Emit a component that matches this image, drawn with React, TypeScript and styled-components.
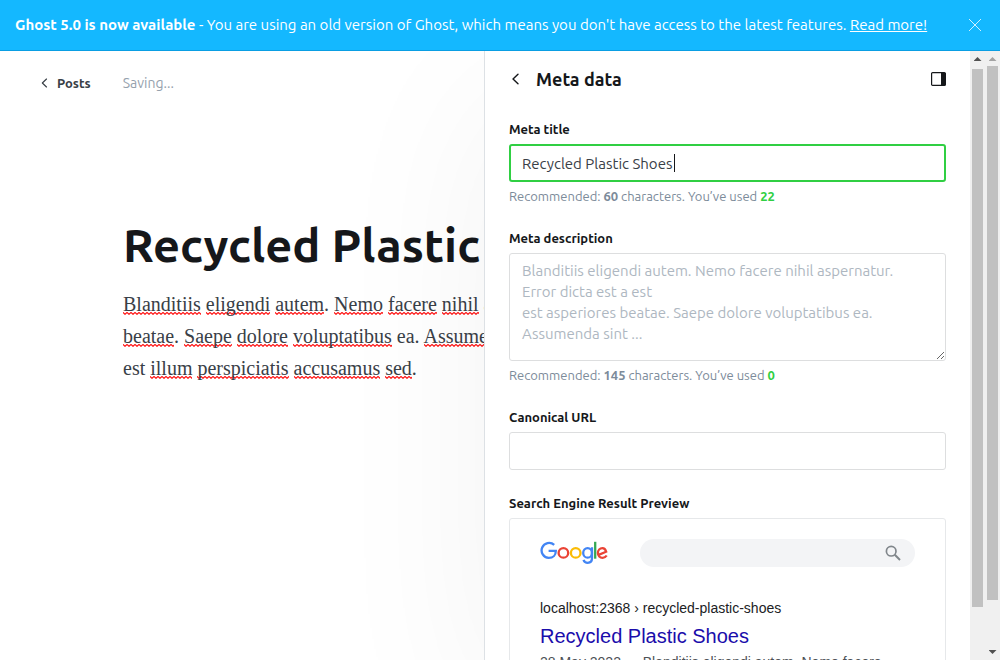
import React, { useState } from "react";
import styled, { createGlobalStyle } from "styled-components";

const ui = `Ubuntu, "Open Sans", "Noto Sans", sans-serif`;

const squiggle = `url("data:image/svg+xml,%3Csvg xmlns='http://www.w3.org/2000/svg' width='4' height='3'%3E%3Cpath d='M-1 .5 0 .5 2 2.3 4 .5 5 .5' fill='none' stroke='%23ff1010' stroke-width='1.2'/%3E%3C/svg%3E")`;

const GlobalStyle = createGlobalStyle`
  *, *::before, *::after { box-sizing: border-box; }
  body {
    margin: 0;
    font-family: ${ui};
    color: #15171a;
    background: #fff;
  }
  button, input, textarea { font-family: inherit; }
  h1, h2, p { margin: 0; }
`;

const Page = styled.div`
  display: flex;
  flex-direction: column;
  height: 100vh;
  overflow: hidden;
`;

const Banner = styled.header`
  display: flex;
  align-items: center;
  justify-content: space-between;
  flex: none;
  height: 51px;
  padding: 0 18px 1px 15px;
  border-bottom: 1px solid #0a9ee3;
  background: #14b8ff;
  color: #fff;
  font-size: 15px;
  line-height: 20px;
  white-space: nowrap;
`;

const BannerTitle = styled.strong`
  font-weight: 600;
`;

const BannerLink = styled.a`
  color: inherit;
  text-decoration: underline;
`;

const IconButton = styled.button`
  display: flex;
  padding: 0;
  border: 0;
  background: none;
  color: inherit;
`;

const Body = styled.div`
  display: flex;
  flex: 1;
  min-height: 0;
`;

const Workspace = styled.div`
  position: relative;
  display: flex;
  flex: 1;
  min-width: 0;
  overflow: hidden;
`;

const Editor = styled.main`
  flex: 1;
  min-width: 0;
`;

const EditorBar = styled.nav`
  display: flex;
  align-items: center;
  gap: 32px;
  padding: 22px 0 0 39px;
  font-size: 14px;
  line-height: 20px;
`;

const BackLink = styled.a`
  display: flex;
  align-items: center;
  gap: 8px;
  color: #394047;
  font-size: 13px;
  font-weight: 600;
  text-decoration: none;
`;

const Status = styled.span`
  color: #95a1ad;
`;

const Article = styled.article`
  padding: 124px 0 0 123px;
`;

const Title = styled.h1`
  font-size: 47px;
  line-height: 56px;
  font-weight: 700;
  white-space: nowrap;
`;

const Paragraph = styled.p`
  margin-top: 15px;
  color: #394047;
  font-family: "Liberation Serif", serif;
  font-size: 20px;
  line-height: 32px;
  white-space: nowrap;
`;

const Misspelt = styled.span`
  background: ${squiggle} left bottom / 4px 3px repeat-x;
`;

const Panel = styled.aside`
  position: absolute;
  top: 0;
  right: 0;
  bottom: 0;
  display: flex;
  width: 501px;
  border-left: 1px solid #dde1e5;
  background: #fff;
  box-shadow: 0 50px 160px rgba(0, 0, 0, 0.05);
`;

const PanelContent = styled.div`
  flex: 1;
  min-width: 0;
  padding: 0 24px;
  overflow: hidden;
`;

const PanelHeader = styled.div`
  display: flex;
  align-items: center;
  gap: 15px;
  height: 56px;
  margin-bottom: 2px;
  color: #15171a;
`;

const PanelTitle = styled.h2`
  flex: 1;
  font-size: 18px;
  line-height: 24px;
  font-weight: 700;
`;

const Field = styled.div`
  display: flex;
  flex-direction: column;
  padding-top: 10px;
  margin-bottom: 12px;
`;

const Label = styled.label`
  margin-bottom: 5px;
  font-size: 13px;
  line-height: 20px;
  font-weight: 600;
`;

const InputWrap = styled.div`
  position: relative;
  display: flex;
`;

const TextInput = styled.input<{ $active?: boolean }>`
  width: 100%;
  height: 38px;
  padding: 0 ${p => (p.$active ? 11 : 12)}px;
  border: ${p => (p.$active ? "2px solid #30cf43" : "1px solid #dddedf")};
  border-radius: 3px;
  outline: 0;
  background: #fff;
  color: #394047;
  font-size: 15px;
`;

const Caret = styled.span`
  position: absolute;
  top: 10px;
  left: 165px;
  width: 1px;
  height: 18px;
  background: #15171a;
`;

const TextArea = styled.textarea`
  width: 100%;
  height: 108px;
  padding: 6px 32px 6px 12px;
  border: 1px solid #dddedf;
  border-radius: 3px;
  outline: 0;
  resize: vertical;
  overflow: hidden;
  color: #394047;
  font-size: 15px;
  line-height: 21px;
  &::placeholder { color: #aeb7c1; opacity: 1; }
`;

const Hint = styled.p`
  margin-top: 4px;
  color: #7c8b9a;
  font-size: 13px;
  line-height: 20px;
`;

const Count = styled.strong`
  color: #30cf43;
`;

const PreviewLabel = styled.h2`
  margin: 23px 0 5px;
  font-size: 13px;
  line-height: 20px;
  font-weight: 600;
`;

const Preview = styled.section`
  padding: 20px 30px;
  border: 1px solid #e6e8ea;
  border-radius: 3px;
  font-family: "Liberation Sans", Arial, sans-serif;
`;

const SearchRow = styled.div`
  display: flex;
  align-items: center;
  gap: 32px;
  margin-bottom: 30px;
`;

const SearchBar = styled.div`
  display: flex;
  flex: 1;
  align-items: center;
  justify-content: flex-end;
  height: 28px;
  padding-right: 14px;
  border-radius: 14px;
  background: #f3f4f6;
`;

const ResultUrl = styled.p`
  color: #202124;
  font-size: 14px;
  line-height: 22px;
`;

const ResultTitle = styled.p`
  margin: 4px 0 2px;
  color: #1a0dab;
  font-size: 20px;
  line-height: 26px;
`;

const ResultText = styled.p`
  padding-right: 16px;
  color: #4d5156;
  font-size: 14px;
  line-height: 22px;
`;

const Track = styled.div`
  flex: none;
  display: flex;
  flex-direction: column;
  align-items: center;
  width: 15px;
  background: #f0f0f0;
`;

const Arrow = styled.span<{ $down?: boolean; $dim?: boolean }>`
  flex: none;
  width: 8px;
  height: 4px;
  margin: ${p => (p.$down ? "0 0 6px" : "6px 0 0")};
  background: ${p => (p.$dim ? "#a3a3a3" : "#505050")};
  clip-path: ${p =>
    p.$down ? "polygon(0 0, 100% 0, 50% 100%)" : "polygon(50% 0, 100% 100%, 0 100%)"};
`;

const Thumb = styled.span<{ $grow: number; $gap: number }>`
  flex: ${p => p.$grow} 0 0;
  width: 11px;
  margin-top: ${p => p.$gap}px;
  background: #c1c1c1;
`;

const Rest = styled.span<{ $grow: number }>`
  flex: ${p => p.$grow} 0 0;
`;

const Chevron = ({ size }: { size: number }) => (
  <svg width={size} height={size} viewBox="0 0 12 12" fill="none" stroke="currentColor" strokeWidth="1.4" strokeLinecap="round" strokeLinejoin="round" aria-hidden="true">
    <path d="M9 1.200 4 6l5 4.800" />
  </svg>
);

const GoogleLogo = () => (
  <svg width="68" height="24" viewBox="0 0 68 24" fill="none" strokeWidth="2.3" role="img" aria-label="Google">
    <path stroke="#4285f4" d="M14.200 3.900A7.500 7.500 0 1 0 8.700 16.900c4.400 0 7.100-2.900 7.100-7H8.600" />
    <circle stroke="#ea4335" cx="23.400" cy="11.900" r="4.800" />
    <circle stroke="#fbbc05" cx="35.700" cy="11.900" r="4.800" />
    <path stroke="#4285f4" d="M52 6.200v10.900c0 3-1.700 4.700-4.200 4.700-2.200 0-3.700-1.300-4.300-3" />
    <ellipse stroke="#4285f4" cx="47.600" cy="11.900" rx="4.400" ry="4.800" />
    <path stroke="#34a853" d="M55.200.8v16.900" />
    <path stroke="#ea4335" d="M58.600 13.900l7.600-3.200C65.500 8.300 64.200 7.100 62.400 7.100c-2.500 0-4.500 2.100-4.500 4.800 0 2.800 2 4.900 4.700 4.900 1.800 0 3.200-.9 4.100-2.300" />
  </svg>
);

const placeholder =
  "Blanditiis eligendi autem. Nemo facere nihil aspernatur. Error dicta est a est\nest asperiores beatae. Saepe dolore voluptatibus ea. Assumenda sint ...";

const lines = [
  "*Blanditiis *eligendi *autem . *Nemo *facere *nihil *aspernatur . Error *dicta est a est",
  "*beatae . *Saepe *dolore *voluptatibus ea. *Assumenda *sint",
  "est *illum *perspiciatis *accusamus *sed .",
];

const renderLine = (line: string) =>
  line.split(" ").map((word, i) => {
    const space = i > 0 && word !== "." ? " " : "";
    return (
      <React.Fragment key={i}>
        {space}
        {word.startsWith("*") ? <Misspelt>{word.slice(1)}</Misspelt> : word}
      </React.Fragment>
    );
  });

export default function App() {
  const [title, setTitle] = useState("Recycled Plastic Shoes");
  const [description, setDescription] = useState("");

  return (
    <Page>
      <GlobalStyle />
      <Banner>
        <span>
          <BannerTitle>Ghost 5.0 is now available</BannerTitle> - You are using an old version of Ghost, which means you
          don't have access to the latest features. <BannerLink href="#update">Read more!</BannerLink>
        </span>
        <IconButton aria-label="Dismiss">
          <svg width="14" height="14" viewBox="0 0 14 14" stroke="currentColor" strokeWidth=".8" aria-hidden="true">
            <path d="M1 1l12 12M13 1 1 13" />
          </svg>
        </IconButton>
      </Banner>
      <Body>
        <Workspace>
          <Editor>
            <EditorBar>
              <BackLink href="#posts">
                <Chevron size={10} />
                Posts
              </BackLink>
              <Status>Saving...</Status>
            </EditorBar>
            <Article>
              <Title>Recycled Plastic Shoes</Title>
              <Paragraph>
                {lines.map((line, i) => (
                  <React.Fragment key={i}>
                    {i > 0 && <br />}
                    {renderLine(line)}
                  </React.Fragment>
                ))}
              </Paragraph>
            </Article>
          </Editor>
          <Panel>
            <PanelContent>
              <PanelHeader>
                <IconButton aria-label="Back">
                  <Chevron size={12} />
                </IconButton>
                <PanelTitle>Meta data</PanelTitle>
                <IconButton aria-label="Toggle settings">
                  <svg width="15" height="14" viewBox="0 0 15 14" aria-hidden="true">
                    <rect x=".6" y=".6" width="13.800" height="12.800" rx="1" fill="#fff" stroke="#15171a" strokeWidth="1.200" />
                    <path d="M10 1h4.500v12H10z" fill="#15171a" />
                  </svg>
                </IconButton>
              </PanelHeader>
              <Field>
                <Label htmlFor="meta-title">Meta title</Label>
                <InputWrap>
                  <TextInput id="meta-title" $active value={title} onChange={e => setTitle(e.target.value)} />
                  <Caret />
                </InputWrap>
                <Hint>
                  Recommended: <strong>60</strong> characters. You’ve used <Count>{title.length}</Count>
                </Hint>
              </Field>
              <Field>
                <Label htmlFor="meta-description">Meta description</Label>
                <TextArea
                  id="meta-description"
                  placeholder={placeholder}
                  value={description}
                  onChange={e => setDescription(e.target.value)}
                />
                <Hint>
                  Recommended: <strong>145</strong> characters. You’ve used <Count>{description.length}</Count>
                </Hint>
              </Field>
              <Field>
                <Label htmlFor="canonical-url">Canonical URL</Label>
                <TextInput id="canonical-url" />
              </Field>
              <PreviewLabel>Search Engine Result Preview</PreviewLabel>
              <Preview>
                <SearchRow>
                  <GoogleLogo />
                  <SearchBar>
                    <svg width="16" height="16" viewBox="0 0 16 16" fill="none" stroke="#80868b" strokeWidth="1.700" aria-hidden="true">
                      <circle cx="6.200" cy="6.200" r="4.800" />
                      <path d="M9.800 9.800 15 15" strokeWidth="2" />
                    </svg>
                  </SearchBar>
                </SearchRow>
                <ResultUrl>localhost:2368 › recycled-plastic-shoes</ResultUrl>
                <ResultTitle>Recycled Plastic Shoes</ResultTitle>
                <ResultText>28 May 2022 — Blanditiis eligendi autem. Nemo facere nihil aspernatur.</ResultText>
              </Preview>
            </PanelContent>
            <Track>
              <Arrow />
              <Thumb $grow={538} $gap={8} />
              <Rest $grow={53} />
            </Track>
          </Panel>
        </Workspace>
        <Track>
          <Arrow $dim />
          <Thumb $grow={534} $gap={5} />
          <Rest $grow={50} />
          <Arrow $down />
        </Track>
      </Body>
    </Page>
  );
}
